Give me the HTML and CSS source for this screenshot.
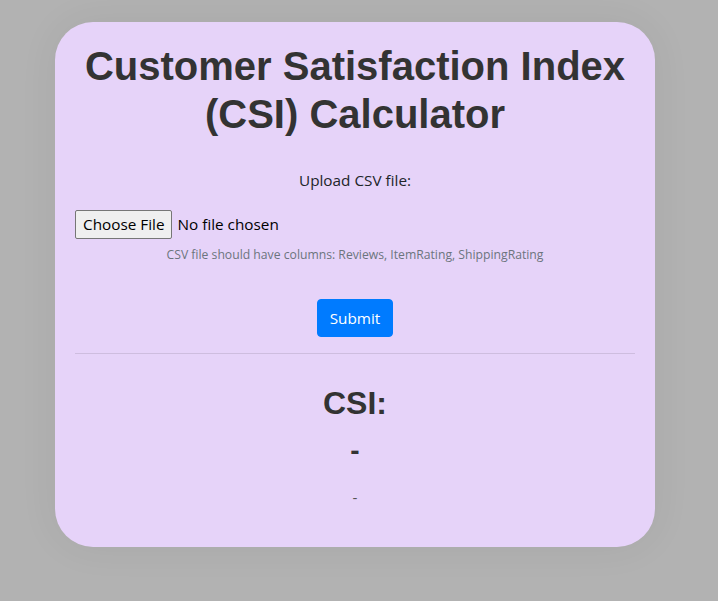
FILE: index.html
```html
<!DOCTYPE html>
<html lang="en">
<head>
<meta charset="utf-8">
<title>Customer Satisfaction Index (CSI) Calculator</title>
<link rel="stylesheet" href="styles.css">
</head>
<body>
<div class="page">
  <main class="card">
    <h1 class="title">Customer Satisfaction Index (CSI) Calculator</h1>
    <form class="upload-form">
      <label class="upload-label">Upload CSV file:</label>
      <div class="file-row">
        <span class="file-btn">Choose File</span>
        <span class="file-name">No file chosen</span>
      </div>
      <small class="help-text">CSV file should have columns: Reviews, ItemRating, ShippingRating</small>
      <div class="submit-row">
        <button type="button" class="submit-btn">Submit</button>
      </div>
    </form>
    <hr class="divider">
    <section class="result">
      <h2 class="result-title">CSI:</h2>
      <h3 class="result-value">-</h3>
      <p class="result-note">-</p>
    </section>
  </main>
</div>
</body>
</html>
```

FILE: styles.css
```css
html, body {
  margin: 0;
  padding: 0;
}

body {
  background: #b2b2b2;
  font-family: "Open Sans", "Noto Sans", sans-serif;
  color: #212529;
  font-size: 15.3px;
  line-height: 1.5;
}

.page {
  display: flex;
  justify-content: center;
  padding: 22px 8px 40px 0;
}

.card {
  width: 600px;
  box-sizing: border-box;
  padding: 20px 20px 22px;
  background: #e6d3f9;
  border-radius: 38px;
  box-shadow: 0 0 40px rgba(0, 0, 0, 0.06);
  text-align: center;
}

.title {
  margin: 0;
  font-family: "Liberation Sans", Arial, sans-serif;
  font-size: 40px;
  line-height: 48px;
  font-weight: bold;
  color: #333333;
}

.upload-form {
  display: flex;
  flex-direction: column;
  margin-top: 30px;
}

.upload-label {
  display: block;
  line-height: 24px;
}

.file-row {
  display: flex;
  align-items: center;
  margin-top: 18px;
  height: 29px;
  text-align: left;
}

.file-btn {
  display: inline-block;
  box-sizing: border-box;
  height: 29px;
  padding: 0 7px;
  line-height: 27px;
  background: #efefef;
  border: 1px solid #767676;
  border-radius: 2px;
  color: #000;
  font-size: 15.3px;
}

.file-name {
  margin-left: 5px;
  color: #000;
}

.help-text {
  display: block;
  margin-top: 6px;
  font-size: 12.2px;
  line-height: 19px;
  color: #6c757d;
}

.submit-row {
  margin-top: 35px;
}

.submit-btn {
  font-family: inherit;
  font-size: 15.3px;
  line-height: 24px;
  padding: 6px 12px;
  height: 38px;
  color: #fff;
  background: #007bff;
  border: 1px solid #007bff;
  border-radius: 4px;
}

.divider {
  margin: 16px 0 0;
  border: 0;
  border-top: 1px solid rgba(0, 0, 0, 0.1);
}

.result {
  padding-top: 30px;
}

.result-title {
  margin: 0 0 12px;
  font-family: "Liberation Sans", Arial, sans-serif;
  font-size: 32px;
  line-height: 38px;
  font-weight: bold;
  color: #333333;
}

.result-value {
  margin: 0 0 17px;
  font-family: "Liberation Sans", Arial, sans-serif;
  font-size: 28px;
  line-height: 34px;
  font-weight: bold;
  color: #333333;
}

.result-note {
  margin: 0 0 16px;
  line-height: 24px;
  color: #555;
}
```
